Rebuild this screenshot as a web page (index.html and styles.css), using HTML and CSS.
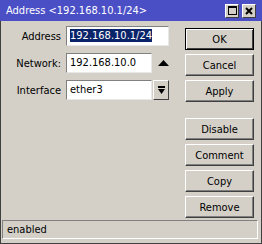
FILE: index.html
```html
<!doctype html>
<html lang="en">
<head>
  <meta charset="utf-8">
  <title>Address</title>
  <link rel="stylesheet" href="styles.css">
</head>
<body>
  <div class="window">
    <div class="titlebar">
      <span class="title">Address &lt;192.168.10.1/24&gt;</span>
      <div class="title-btns">
        <span class="tbtn">
          <svg width="9" height="9" viewBox="0 0 9 9"><rect x="0.5" y="0.5" width="8" height="8" fill="none" stroke="#000"/><rect x="0" y="0" width="9" height="2" fill="#000"/></svg>
        </span>
        <span class="tbtn">
          <svg width="8" height="8" viewBox="0 0 8 8"><path d="M1 1 L7 7 M7 1 L1 7" stroke="#000" stroke-width="2"/></svg>
        </span>
      </div>
    </div>
    <div class="content">
      <div class="fields">
        <div class="row">
          <label class="lbl">Address</label>
          <div class="input wide"><span class="sel">192.168.10.1/24</span></div>
        </div>
        <div class="row">
          <label class="lbl">Network:</label>
          <div class="input">192.168.10.0</div>
          <span class="arrow">
            <svg width="11" height="6" viewBox="0 0 11 6"><path d="M0 6 L5.5 0 L11 6 Z" fill="#000"/></svg>
          </span>
        </div>
        <div class="row">
          <label class="lbl">Interface</label>
          <div class="input">ether3</div>
          <span class="dropbtn">
            <svg width="7" height="8" viewBox="0 0 7 8"><rect x="0" y="0" width="7" height="2" fill="#000"/><path d="M0 3 L7 3 L3.5 8 Z" fill="#000"/></svg>
          </span>
        </div>
      </div>
      <div class="actions">
        <button class="btn default">OK</button>
        <button class="btn">Cancel</button>
        <button class="btn">Apply</button>
        <div class="spacer"></div>
        <button class="btn">Disable</button>
        <button class="btn">Comment</button>
        <button class="btn">Copy</button>
        <button class="btn">Remove</button>
      </div>
    </div>
    <div class="status">enabled</div>
  </div>
</body>
</html>
```

FILE: styles.css
```css
body {
  margin: 0;
  padding: 0;
  font-family: 'DejaVu Sans Condensed', 'Liberation Sans', sans-serif;
  font-size: 11px;
  color: #000;
  background: #d4d0c8;
}
.window {
  width: 262px;
  height: 244px;
  box-sizing: border-box;
  background: #d4d0c8;
  border: 1px solid #404040;
  border-top: none;
  display: flex;
  flex-direction: column;
}
.titlebar {
  height: 21px;
  margin: 0 -1px;
  background: #4b4fc6;
  color: #fff;
  display: flex;
  align-items: center;
  justify-content: space-between;
  padding: 0 6px 0 6px;
  font-size: 11px;
}
.title-btns {
  display: flex;
  gap: 3px;
}
.tbtn {
  width: 14px;
  height: 14px;
  box-sizing: border-box;
  background: #d4d0c8;
  border: 1px solid;
  border-color: #fff #404040 #404040 #fff;
  display: flex;
  align-items: center;
  justify-content: center;
}
.content {
  flex: 1;
  display: flex;
  padding: 5px 0 0 0;
}
.fields {
  width: 184px;
  display: flex;
  flex-direction: column;
  gap: 7px;
}
.row {
  display: flex;
  align-items: center;
  height: 20px;
}
.lbl {
  width: 60px;
  text-align: right;
  margin-right: 5px;
}
.input {
  width: 86px;
  height: 20px;
  box-sizing: border-box;
  background: #fff;
  border: 1px solid;
  border-color: #808080 #e8e8e8 #e8e8e8 #808080;
  padding: 0 3px;
  line-height: 18px;
  white-space: nowrap;
  overflow: hidden;
}
.input.wide {
  width: 103px;
}
.sel {
  background: #0a246a;
  color: #fff;
}
.arrow {
  margin-left: 6px;
  display: flex;
  align-items: center;
}
.dropbtn {
  margin-left: 1px;
  width: 16px;
  height: 20px;
  box-sizing: border-box;
  border: 1px solid;
  border-color: #fff #404040 #404040 #fff;
  display: flex;
  align-items: center;
  justify-content: center;
}
.actions {
  display: flex;
  flex-direction: column;
  gap: 4px;
  padding-top: 2px;
}
.spacer {
  height: 8px;
}
.btn {
  width: 69px;
  height: 22px;
  margin: 0;
  padding: 0;
  font-family: 'DejaVu Sans Condensed', 'Liberation Sans', sans-serif;
  font-size: 11px;
  color: #000;
  background: #d4d0c8;
  border: 1px solid;
  border-color: #fff #404040 #404040 #fff;
  box-shadow: inset -1px -1px #808080;
}
.btn.default {
  border: 1px solid #000;
  box-shadow: inset 1px 1px #fff, inset -1px -1px #404040;
}
.status {
  height: 19px;
  box-sizing: border-box;
  margin: 0 3px 4px 1px;
  border: 1px solid;
  border-color: #808080 #fff #fff #808080;
  padding: 0 4px;
  line-height: 17px;
}
```
